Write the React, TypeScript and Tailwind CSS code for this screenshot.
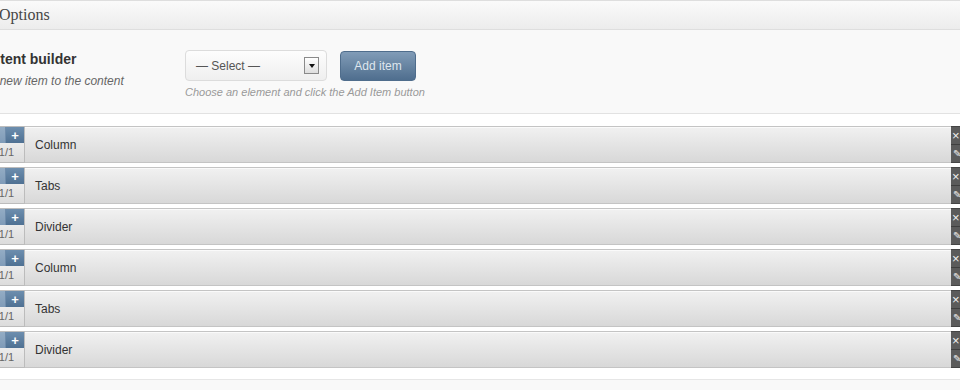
const items = ['Column', 'Tabs', 'Divider', 'Column', 'Tabs', 'Divider']

function ItemRow({ label }: { label: string }) {
  return (
    <div className="flex h-[37px] w-[982px] -ml-[11px]">
      {/* size controls */}
      <div className="flex w-[36px] flex-col border-y border-r border-[#bcbcbc]">
        <div className="flex h-[16px]">
          <div className="w-[17px] bg-gradient-to-b from-[#93acc4] to-[#7f9bb8] border-r border-[#6f8cab]" />
          <div className="flex flex-1 items-center justify-center bg-gradient-to-b from-[#6d8eae] to-[#4f7193] text-[13px] font-bold leading-none text-white">
            +
          </div>
        </div>
        <div className="flex flex-1 items-center justify-center bg-gradient-to-b from-[#ececec] to-[#dcdcdc] text-[11px] text-[#666]">
          1/1
        </div>
      </div>

      {/* title bar */}
      <div className="flex flex-1 items-center border-y border-[#c4c4c4] bg-gradient-to-b from-[#f1f1f1] to-[#d8d8d8] pl-[10px] text-[12px] text-[#333] shadow-[inset_0_1px_0_#fafafa]">
        {label}
      </div>

      {/* edit / remove */}
      <div className="flex w-[20px] flex-col border-y border-[#444] bg-[#5b5b5b] text-[#eee]">
        <div className="flex flex-1 items-center pl-[1px] text-[13px] leading-none border-b border-[#3f3f3f]">
          ×
        </div>
        <div className="flex flex-1 items-center pl-[2px] text-[10px] leading-none">
          ✎
        </div>
      </div>
    </div>
  )
}

export default function App() {
  return (
    <div className="h-[390px] w-[960px] overflow-hidden bg-white font-['Liberation_Sans',Arial,sans-serif]">
      {/* Section header */}
      <div className="flex h-[30px] items-center border-y border-[#dedede] bg-gradient-to-b from-[#fafafa] to-[#ececec]">
        <span className="-ml-[1px] font-['Liberation_Serif',Georgia,serif] text-[16px] text-[#464646]">
          Options
        </span>
      </div>

      {/* Builder options */}
      <div className="flex h-[84px] border-b border-[#e2e2e2] bg-[#f9f9f9] pt-[20px]">
        <div className="w-[185px] shrink-0">
          <div className="-ml-[27px] text-[14px] font-bold leading-[18px] text-[#333]">
            Content builder
          </div>
          <div className="-ml-[35px] mt-[4px] text-[12px] italic text-[#666]">
            Add a new item to the content
          </div>
        </div>
        <div>
          <div className="flex items-center gap-[13px]">
            <div className="flex h-[31px] w-[142px] items-center justify-between rounded-[4px] border border-[#dcdcdc] bg-gradient-to-b from-[#fdfdfd] to-[#efefef] pl-[10px] pr-[7px]">
              <span className="text-[12px] text-[#555]">— Select —</span>
              <span className="flex h-[17px] w-[15px] items-center justify-center border border-[#8a8a8a] bg-gradient-to-b from-[#ffffff] to-[#dedede]">
                <span className="h-0 w-0 border-x-[3px] border-t-[4px] border-x-transparent border-t-[#111]" />
              </span>
            </div>
            <button className="h-[30px] w-[76px] rounded-[4px] border border-[#4f6d8c] bg-gradient-to-b from-[#819cb7] to-[#4f6e8e] text-[12px] text-[#dfe6ee]">
              Add item
            </button>
          </div>
          <div className="mt-[3px] text-[11px] italic text-[#999]">
            Choose an element and click the Add Item button
          </div>
        </div>
      </div>

      {/* Items */}
      <div className="mt-[12px] flex flex-col gap-[4px]">
        {items.map((item, i) => (
          <ItemRow key={i} label={item} />
        ))}
      </div>

      <div className="mt-[11px] h-[20px] border-t border-[#e6e6e6] bg-[#f9f9f9]" />
    </div>
  )
}
